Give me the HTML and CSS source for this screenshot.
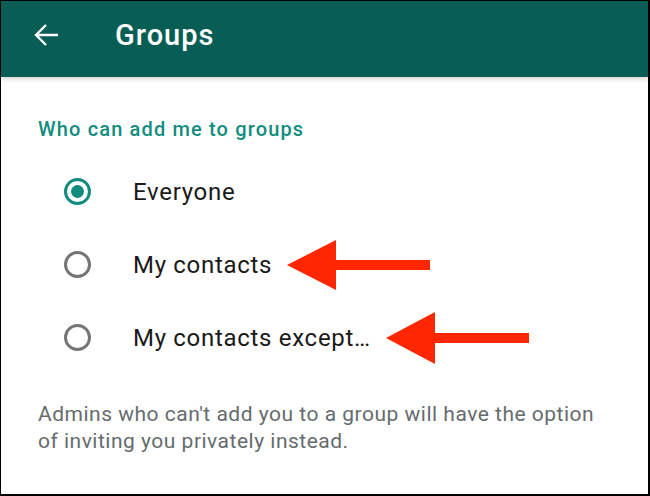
FILE: index.html
```html
<!DOCTYPE html>
<html>
<head>
<meta charset="utf-8">
<link rel="stylesheet" href="styles.css">
</head>
<body>
<div class="frame">
  <header class="appbar">
    <svg class="back" width="26" height="26" viewBox="0 0 26 26" aria-hidden="true">
      <path d="M25 13H3M13 3L3 13l10 10" fill="none" stroke="#fff" stroke-width="2.4" stroke-linecap="butt" stroke-linejoin="miter"/>
    </svg>
    <h1 class="title">Groups</h1>
  </header>
  <main class="content">
    <h2 class="section">Who can add me to groups</h2>
    <ul class="options">
      <li class="option">
        <span class="radio checked"></span>
        <span class="label">Everyone</span>
      </li>
      <li class="option">
        <span class="radio"></span>
        <span class="label">My contacts</span>
      </li>
      <li class="option">
        <span class="radio"></span>
        <span class="label">My contacts except…</span>
      </li>
    </ul>
    <p class="note">Admins who can't add you to a group will have the option<br>of inviting you privately instead.</p>
  </main>
  <svg class="arrow arrow1" width="144" height="50" viewBox="0 0 144 50" aria-hidden="true">
    <polygon points="0,25 49,0 49,20 143,20 143,30 49,30 49,50" fill="#ff2600"/>
  </svg>
  <svg class="arrow arrow2" width="144" height="52" viewBox="0 0 144 52" aria-hidden="true">
    <polygon points="0,26 49,0 49,21 143,21 143,31 49,31 49,52" fill="#ff2600"/>
  </svg>
</div>
</body>
</html>
```
FILE: styles.css
```css
* { box-sizing: border-box; }
html, body { margin: 0; padding: 0; background: #fff; }
body { font-family: Roboto, "Noto Sans", sans-serif; }
.frame {
  position: relative;
  width: 650px;
  height: 496px;
  border-style: solid;
  border-color: #000;
  border-width: 1px 2px 2px 1px;
  background: #fff;
  overflow: hidden;
}
.appbar {
  height: 76px;
  background: #085e54;
  display: flex;
  align-items: center;
  padding: 0 0 8px 32px;
  box-shadow: 0 2px 5px rgba(0,0,0,0.18);
  position: relative;
  z-index: 1;
}
.back { flex: none; }
.title {
  margin: 0 0 0 56px;
  color: #fff;
  font-size: 29px;
  font-weight: 500;
  letter-spacing: 1px;
  line-height: 34px;
}
.content { padding: 39px 0 0 37px; }
.section {
  margin: 0;
  color: #128c7e;
  font-size: 20px;
  font-weight: 500;
  line-height: 26px;
  letter-spacing: 1.15px;
}
.options { list-style: none; margin: 13px 0 0 0; padding: 0; }
.option {
  display: flex;
  align-items: center;
  height: 73px;
}
.radio {
  flex: none;
  width: 27px;
  height: 27px;
  margin-left: 26px;
  border-radius: 50%;
  border: 3px solid #757575;
  display: flex;
  align-items: center;
  justify-content: center;
}
.radio.checked { border-color: #128c7e; }
.radio.checked::after {
  content: "";
  width: 13px;
  height: 13px;
  border-radius: 50%;
  background: #128c7e;
}
.label {
  margin-left: 42px;
  font-size: 24px;
  line-height: 28px;
  color: #1a1a1a;
  letter-spacing: 0.7px;
}
.note {
  margin: 27px 0 0 0;
  white-space: nowrap;
  color: #666b6e;
  font-size: 21px;
  line-height: 27px;
  letter-spacing: 0.5px;
}
.arrow { position: absolute; z-index: 2; }
.arrow1 { left: 286px; top: 239px; }
.arrow2 { left: 385px; top: 311px; }
```
